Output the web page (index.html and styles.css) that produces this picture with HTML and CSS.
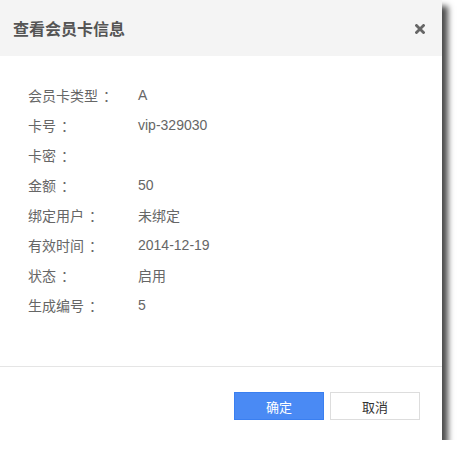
FILE: index.html
```html
<!DOCTYPE html>
<html lang="zh">
<head>
<meta charset="utf-8">
<link rel="stylesheet" href="styles.css">
</head>
<body>
<div class="dialog">
  <div class="dialog-header">
    <span class="dialog-title">查看会员卡信息</span>
    <svg class="dialog-close" width="10" height="10" viewBox="0 0 10 10"><path d="M1.5 1.5 L8.5 8.5 M8.5 1.5 L1.5 8.5" stroke="#666" stroke-width="2.8" stroke-linecap="square"/></svg>
  </div>
  <div class="dialog-body">
    <div class="row"><span class="label">会员卡类型<span class="colon">：</span></span><span class="value">A</span></div>
    <div class="row"><span class="label">卡号<span class="colon">：</span></span><span class="value">vip-329030</span></div>
    <div class="row"><span class="label">卡密<span class="colon">：</span></span><span class="value"></span></div>
    <div class="row"><span class="label">金额<span class="colon">：</span></span><span class="value">50</span></div>
    <div class="row"><span class="label">绑定用户<span class="colon">：</span></span><span class="value">未绑定</span></div>
    <div class="row"><span class="label">有效时间<span class="colon">：</span></span><span class="value">2014-12-19</span></div>
    <div class="row"><span class="label">状态<span class="colon">：</span></span><span class="value">启用</span></div>
    <div class="row"><span class="label">生成编号<span class="colon">：</span></span><span class="value">5</span></div>
  </div>
  <div class="dialog-footer">
    <button class="btn btn-primary">确定</button>
    <button class="btn btn-default">取消</button>
  </div>
</div>
</body>
</html>
```
FILE: styles.css
```css
html, body {
  margin: 0;
  padding: 0;
  background: #fff;
}
body {
  font-family: "Liberation Sans", "Noto Sans CJK SC", sans-serif;
  font-size: 14px;
  color: #555;
}
.dialog {
  width: 442px;
  height: 440px;
  background: #fff;
  box-shadow: 6px 6px 6px rgba(0, 0, 0, 0.7);
  display: flex;
  flex-direction: column;
}
.dialog-header {
  height: 56px;
  background: #f4f4f4;
  display: flex;
  align-items: center;
  justify-content: space-between;
  padding: 0 17px 0 13px;
  flex-shrink: 0;
}
.dialog-title {
  font-size: 16px;
  font-weight: bold;
  color: #555;
}
.dialog-close {
  display: block;
  margin-top: 2px;
}
.dialog-body {
  flex: 1;
  padding: 24px 0 0 28px;
  border-bottom: 1px solid #e5e5e5;
}
.row {
  height: 30px;
  display: flex;
  align-items: center;
}
.label {
  width: 110px;
  color: #666;
}
.colon {
  padding-left: 5px;
}
.value {
  color: #666;
}
.dialog-footer {
  height: 73px;
  display: flex;
  justify-content: flex-end;
  align-items: flex-start;
  gap: 6px;
  padding: 25px 22px 0 0;
  box-sizing: border-box;
  flex-shrink: 0;
}
.btn {
  width: 90px;
  height: 28px;
  font-family: "Liberation Sans", "Noto Sans CJK SC", sans-serif;
  font-size: 13px;
  border-radius: 0;
  box-sizing: border-box;
  cursor: pointer;
}
.btn-primary {
  background: #4a8af4;
  border: 1px solid #3a7ff0;
  color: #fff;
}
.btn-default {
  background: #fff;
  border: 1px solid #ddd;
  color: #333;
}
```
